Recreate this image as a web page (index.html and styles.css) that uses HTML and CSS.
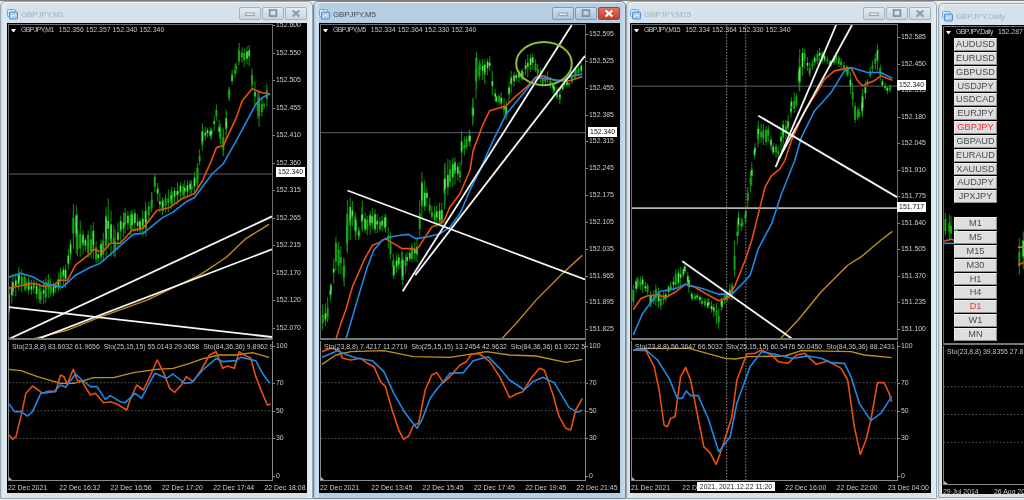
FILE: index.html
```html
<!DOCTYPE html>
<html lang="en">
<head>
<meta charset="utf-8">
<title>GBPJPY charts</title>
<link rel="stylesheet" href="styles.css">
</head>
<body>
<main class="desktop">

<section class="window w1">
  <header class="titlebar">
    <svg class="app-icon" viewBox="0 0 11 11"><rect x="0.5" y="0.5" width="8" height="7" rx="1" class="ic-back"/><rect x="2.5" y="3" width="8" height="7" rx="1" class="ic-front"/><path d="M4 8 5.5 6 7 7 9 5" class="ic-line"/></svg>
    <span class="title">GBPJPY,M1</span>
    <div class="controls">
      <span class="ctl"><svg viewBox="0 0 22 13"><rect x="6" y="6" width="10" height="3" class="glyph"/></svg></span>
      <span class="ctl"><svg viewBox="0 0 22 13"><rect x="7" y="2.5" width="8" height="7" class="glyph-box"/></svg></span>
      <span class="ctl"><svg viewBox="0 0 22 13"><path d="M7 3 15 10M15 3 7 10" class="glyph-x"/></svg></span>
    </div>
  </header>
  <div class="client">
    <div class="pane main-pane">
      <svg class="plot" viewBox="8 24 265 314" preserveAspectRatio="none">
        <g class="candles" data-step="2.8" data-env="8,285,328;12,272,300;18,265,293;25,275,295;33,277,297;40,280,305;45,273,305;50,275,298;55,282,295;60,265,290;65,260,290;70,235,262;73,198,255;77,205,260;85,235,255;93,220,265;98,250,265;103,225,262;108,192,260;115,225,265;125,205,235;132,205,235;140,215,235;146,200,240;152,190,215;155,172,190;160,190,215;163,195,215;172,185,210;178,180,205;185,180,200;192,178,195;195,170,195;198,160,190;200,147,165;203,120,150;208,127,137;212,125,140;217,103,123;221,120,145;224,127,160;227,107,140;230,83,100;233,67,83;237,60,75;240,40,67;245,43,67;250,43,70;253,67,90;260,90,127;265,100,110;270,67,107"></g>
        <line x1="8" y1="173.5" x2="273" y2="173.5" class="hline"/>
        <polyline class="gold" points="32,339 67,330 97,318 147,300 200,275 227,257 247,238 270,224"/>
        <polyline class="red" points="8,288 17,286 33,283 43,286 53,285 60,280 67,280 75,265 90,253 93,249 102,252 110,243 120,243 132,230 143,228 157,210 170,207 183,198 195,193 203,180 212,160 217,147 224,145 237,117 243,100 253,88 263,92 271,93"/>
        <polyline class="blue" points="8,277 20,273 33,277 43,283 62,287 75,275 90,267 100,263 117,248 133,234 143,233 163,217 173,212 187,201 195,197 213,173 224,163 237,140 257,103 263,97 271,93"/>
        <line x1="8" y1="339" x2="273" y2="216" class="trend"/>
        <line x1="37" y1="339" x2="273" y2="249" class="trend"/>
        <line x1="8" y1="307" x2="273" y2="337" class="trend"/>
      </svg>
      <p class="legend"><i class="tri"></i><span class="sym">GBPJPY,M1</span><span>152.356 152.357 152.340 152.340</span></p>
    </div>
    <div class="price-axis">
      <span>152.600</span><span>152.550</span><span>152.505</span><span>152.455</span><span>152.410</span><span>152.360</span><span>152.315</span><span>152.265</span><span>152.215</span><span>152.170</span><span>152.120</span><span>152.070</span>
    </div>
    <div class="sep"></div>
    <div class="pane sub-pane">
      <svg class="plot" viewBox="24 33 795 417" preserveAspectRatio="none">
        <line x1="24" y1="158" x2="819" y2="158" class="level"/><line x1="24" y1="242" x2="819" y2="242" class="level"/><line x1="24" y1="325" x2="819" y2="325" class="level"/>
        <polygon points="24,450 24,441 33,450" class="corner"/>
        <polyline class="gold" points="24,118 60,122 110,140 180,160 220,160 280,143 340,143 400,128 470,118 520,115 570,100 610,86 660,75 710,75 760,68 810,82"/>
        <polyline class="red" points="25,315 35,328 45,320 60,260 75,190 95,168 115,182 125,190 145,183 165,185 180,135 190,140 200,162 218,118 230,150 245,155 270,195 285,190 310,218 330,215 350,222 380,240 390,210 410,165 430,180 445,150 472,90 490,125 510,175 525,187 545,165 560,140 580,155 605,120 630,75 650,65 670,115 685,108 705,115 720,65 735,75 755,85 770,140 790,190 805,225 815,222"/>
        <polyline class="blue" points="25,222 40,245 60,245 80,258 95,245 120,190 160,185 180,165 195,172 225,132 245,150 270,170 290,170 315,208 330,197 360,215 375,218 405,190 425,205 445,165 465,130 500,145 520,132 555,160 575,158 610,120 650,85 670,95 710,92 725,82 770,92 790,130 812,160"/>
      </svg>
      <p class="legend sub-legend"><span>Sto(23,8,8) 83.6032 61.9656</span><span>Sto(25,15,15) 55.0143 29.3658</span><span>Sto(84,36,36) 9.8962 9</span></p>
    </div>
    <div class="level-axis"><span>100</span><span>70</span><span>50</span><span>30</span><span>0</span></div>
    <div class="time-axis">
      <span>22 Dec 2021</span><span>22 Dec 16:32</span><span>22 Dec 16:56</span><span>22 Dec 17:20</span><span>22 Dec 17:44</span><span>22 Dec 18:08</span>
    </div>
    <b class="tag tag-a">152.340</b>
  </div>
</section>

<section class="window w2 active">
  <header class="titlebar">
    <svg class="app-icon" viewBox="0 0 11 11"><rect x="0.5" y="0.5" width="8" height="7" rx="1" class="ic-back"/><rect x="2.5" y="3" width="8" height="7" rx="1" class="ic-front"/><path d="M4 8 5.5 6 7 7 9 5" class="ic-line"/></svg>
    <span class="title">GBPJPY,M5</span>
    <div class="controls">
      <span class="ctl"><svg viewBox="0 0 22 13"><rect x="6" y="6" width="10" height="3" class="glyph"/></svg></span>
      <span class="ctl"><svg viewBox="0 0 22 13"><rect x="7" y="2.5" width="8" height="7" class="glyph-box"/></svg></span>
      <span class="ctl ctl-close"><svg viewBox="0 0 22 13"><path d="M7 3 15 10M15 3 7 10" class="glyph-x"/></svg></span>
    </div>
  </header>
  <div class="client">
    <div class="pane main-pane">
      <svg class="plot" viewBox="30 72 798 942" preserveAspectRatio="none">
        <g class="candles" data-step="8.4" data-env="35,900,1010;50,880,980;60,840,900;75,700,830;90,730,830;100,770,860;110,570,770;125,600,680;135,640,720;145,680,720;155,600,700;170,640,710;185,610,700;200,640,700;215,640,700;225,640,700;240,690,780;250,760,840;265,750,810;277,750,860;290,750,800;305,720,790;320,700,800;335,510,680;350,560,620;365,610,660;380,600,690;395,600,690;405,450,640;420,470,560;435,470,560;450,470,550;455,390,500;470,400,450;480,380,440;490,275,370;500,130,280;510,170,240;525,170,260;540,160,220;548,200,290;560,280,310;575,270,330;590,300,370;605,195,280;620,210,250;640,200,240;655,155,230;670,150,210;685,180,230;700,220,260;715,210,250;735,240,290;752,260,310;765,230,260;780,240,260;800,200,235;820,180,230"></g>
        <line x1="30" y1="396" x2="828" y2="396" class="hline"/>
        <polyline class="gold" points="575,1018 620,970 680,900 760,820 820,765"/>
        <polyline class="red" points="75,1018 90,970 105,930 125,860 160,780 185,735 205,727 225,715 250,730 275,745 300,745 320,748 345,710 365,680 400,665 420,620 450,580 480,510 490,450 520,370 540,330 590,315 620,285 650,260 680,228 700,225 740,240 780,240 820,228"/>
        <polyline class="blue" points="105,1018 140,900 170,800 190,750 215,720 240,710 270,705 295,702 315,715 350,710 390,700 420,680 450,640 480,570 510,510 550,420 590,340 640,280 680,230 720,235 760,240 790,225 820,220"/>
        <line x1="277" y1="873" x2="788" y2="72" class="trend"/>
        <line x1="315" y1="825" x2="828" y2="165" class="trend"/>
        <line x1="110" y1="570" x2="828" y2="838" class="trend"/>
        <ellipse cx="704" cy="188" rx="84" ry="65" class="circle"/>
      </svg>
      <p class="legend"><i class="tri"></i><span class="sym">GBPJPY,M5</span><span>152.334 152.364 152.330 152.340</span></p>
    </div>
    <div class="price-axis">
      <span>152.595</span><span>152.525</span><span>152.455</span><span>152.385</span><span>152.315</span><span>152.245</span><span>152.175</span><span>152.105</span><span>152.035</span><span>151.965</span><span>151.895</span><span>151.825</span>
    </div>
    <div class="sep"></div>
    <div class="pane sub-pane">
      <svg class="plot" viewBox="30 33 798 417" preserveAspectRatio="none">
        <line x1="30" y1="158" x2="828" y2="158" class="level"/><line x1="30" y1="242" x2="828" y2="242" class="level"/><line x1="30" y1="325" x2="828" y2="325" class="level"/>
        <polygon points="30,450 30,441 39,450" class="corner"/>
        <polyline class="gold" points="33,103 75,75 120,65 220,62 310,80 420,82 530,65 600,75 680,78 770,97 820,88"/>
        <polyline class="red" points="33,65 60,55 85,60 95,85 120,90 150,85 170,100 190,110 210,155 225,170 245,240 265,300 280,328 295,318 310,285 325,280 345,180 365,135 380,128 400,158 420,140 450,105 470,95 485,72 510,72 540,95 570,140 600,203 620,192 640,185 665,145 690,115 705,120 730,190 750,260 770,295 785,300 800,240 820,205"/>
        <polyline class="blue" points="33,82 80,62 110,75 140,85 185,92 220,125 250,190 285,250 320,295 335,270 360,205 380,178 400,155 420,130 460,128 490,92 535,80 570,115 600,150 645,180 670,155 700,142 735,158 760,200 780,233 805,247 820,240"/>
      </svg>
      <p class="legend sub-legend"><span>Sto(23,8,8) 7.4217 11.2719</span><span>Sto(25,15,15) 13.2454 42.9632</span><span>Sto(84,36,36) 61.9222 5</span></p>
    </div>
    <div class="level-axis"><span>100</span><span>70</span><span>50</span><span>30</span><span>0</span></div>
    <div class="time-axis">
      <span>22 Dec 2021</span><span>22 Dec 13:45</span><span>22 Dec 15:45</span><span>22 Dec 17:45</span><span>22 Dec 19:45</span><span>22 Dec 21:45</span>
    </div>
    <b class="tag tag-a">152.340</b>
  </div>
</section>

<section class="window w3">
  <header class="titlebar">
    <svg class="app-icon" viewBox="0 0 11 11"><rect x="0.5" y="0.5" width="8" height="7" rx="1" class="ic-back"/><rect x="2.5" y="3" width="8" height="7" rx="1" class="ic-front"/><path d="M4 8 5.5 6 7 7 9 5" class="ic-line"/></svg>
    <span class="title">GBPJPY,M15</span>
    <div class="controls">
      <span class="ctl"><svg viewBox="0 0 22 13"><rect x="6" y="6" width="10" height="3" class="glyph"/></svg></span>
      <span class="ctl"><svg viewBox="0 0 22 13"><rect x="7" y="2.5" width="8" height="7" class="glyph-box"/></svg></span>
      <span class="ctl"><svg viewBox="0 0 22 13"><path d="M7 3 15 10M15 3 7 10" class="glyph-x"/></svg></span>
    </div>
  </header>
  <div class="client">
    <div class="pane main-pane">
      <svg class="plot" viewBox="18 72 801 942" preserveAspectRatio="none">
        <g class="candles" data-step="8.4" data-env="22,845,920;35,820,870;50,825,880;65,845,890;75,875,930;90,845,920;105,870,930;120,865,915;135,835,880;150,805,875;165,800,860;178,790,825;190,820,890;200,880,905;215,875,900;230,885,925;250,890,930;265,900,960;280,910,995;290,880,930;305,875,910;320,830,915;328,710,830;340,620,725;352,655,685;362,620,670;368,550,625;380,480,560;390,420,470;400,360,440;415,360,440;430,370,430;445,420,470;460,430,480;475,350,450;490,340,400;500,280,350;515,270,330;525,120,270;540,140,210;555,180,230;570,160,200;585,130,190;600,150,190;620,180,200;635,150,190;650,170,210;670,190,230;685,230,320;692,300,380;705,320,355;715,250,350;730,230,260;745,170,220;760,125,220;775,230,260;790,250,285;805,240,275"></g>
        <line x1="18" y1="256" x2="819" y2="256" class="hline"/>
        <line x1="18" y1="623" x2="819" y2="623" class="hline-bold"/>
        <line x1="304" y1="72" x2="304" y2="1014" class="vdash"/><line x1="362" y1="72" x2="362" y2="1014" class="vdash"/>
        <polyline class="gold" points="465,1018 520,960 590,875 670,795 710,770 770,720 805,693"/>
        <polyline class="red" points="22,928 45,895 65,887 100,885 120,892 150,875 180,852 210,862 240,880 280,902 310,892 330,855 360,780 380,720 405,620 420,560 440,525 465,505 480,480 500,420 540,330 580,270 600,235 630,210 680,200 700,240 715,255 750,240 770,225 805,238"/>
        <polyline class="blue" points="22,1005 50,940 100,875 150,865 180,852 230,865 280,882 320,882 360,842 375,825 400,745 440,670 470,580 510,480 530,410 570,330 620,275 660,210 680,200 730,215 770,215 805,232"/>
        <line x1="452" y1="500" x2="635" y2="72" class="trend"/>
        <line x1="462" y1="475" x2="683" y2="72" class="trend"/>
        <line x1="400" y1="345" x2="819" y2="590" class="trend"/>
        <line x1="170" y1="783" x2="507" y2="1020" class="trend"/>
      </svg>
      <p class="legend"><i class="tri"></i><span class="sym">GBPJPY,M15</span><span>152.334 152.364 152.330 152.340</span></p>
    </div>
    <div class="price-axis">
      <span>152.585</span><span>152.450</span><span>152.315</span><span>152.180</span><span>152.045</span><span>151.910</span><span>151.775</span><span>151.640</span><span>151.505</span><span>151.370</span><span>151.235</span><span>151.100</span>
    </div>
    <div class="sep"></div>
    <div class="pane sub-pane">
      <svg class="plot" viewBox="18 33 801 417" preserveAspectRatio="none">
        <line x1="18" y1="158" x2="819" y2="158" class="level"/><line x1="18" y1="242" x2="819" y2="242" class="level"/><line x1="18" y1="325" x2="819" y2="325" class="level"/>
        <line x1="304" y1="33" x2="304" y2="450" class="vdash"/><line x1="362" y1="33" x2="362" y2="450" class="vdash"/>
        <polygon points="18,450 18,441 27,450" class="corner"/>
        <polyline class="gold" points="22,60 60,55 190,55 300,85 330,87 370,80 480,78 530,62 680,65 720,75 803,83"/>
        <polyline class="red" points="22,60 60,62 85,110 100,180 115,285 125,290 135,265 148,260 165,140 180,112 195,150 215,250 235,350 255,370 272,403 285,370 320,260 335,150 365,72 390,70 410,60 440,75 460,95 490,100 515,75 540,70 575,103 610,93 650,115 670,150 690,290 708,373 725,330 740,270 760,158 780,158 795,190 803,215"/>
        <polyline class="blue" points="22,60 60,60 95,90 130,145 155,205 170,205 182,183 195,197 218,197 250,270 280,365 315,320 335,220 375,110 410,65 450,73 500,85 550,78 590,85 620,98 660,100 680,140 705,220 740,272 770,250 803,200"/>
      </svg>
      <p class="legend sub-legend"><span>Sto(23,8,8) 56.3647 66.5032</span><span>Sto(25,15,15) 60.5476 50.0450</span><span>Sto(84,36,36) 88.2431</span></p>
    </div>
    <div class="level-axis"><span>100</span><span>70</span><span>50</span><span>30</span><span>0</span></div>
    <div class="time-axis">
      <span>21 Dec 2021</span><span>22 Dec 10:00</span><span>22 Dec 16:00</span><span>22 Dec 22:00</span><span>23 Dec 04:00</span>
    </div>
    <b class="tag tag-a">152.340</b>
    <b class="tag tag-b">151.717</b>
    <b class="time-tip">2021, 2021.12.22 11:20</b>
  </div>
</section>

<section class="window w4">
  <header class="titlebar">
    <svg class="app-icon" viewBox="0 0 11 11"><rect x="0.5" y="0.5" width="8" height="7" rx="1" class="ic-back"/><rect x="2.5" y="3" width="8" height="7" rx="1" class="ic-front"/><path d="M4 8 5.5 6 7 7 9 5" class="ic-line"/></svg>
    <span class="title">GBPJPY,Daily</span>
  </header>
  <div class="client">
    <div class="pane main-pane">
      <svg class="plot" viewBox="943 26 81 317" preserveAspectRatio="none">
        <g class="candles" data-step="2.8" data-env="944,212,240;948,215,243;952,225,240;956,235,245"></g>
        <g class="candles" data-step="2.8" data-env="997,235,275;1003,225,262;1006,215,268;1010,225,285;1014,240,300;1018,265,320;1022,250,310"></g>
        <polyline class="gold" points="996,247 1010,246 1024,249"/>
        <polyline class="red" points="943,241 948,239 953,241 958,241"/>
        <polyline class="red" points="996,265 1003,260 1010,256 1017,262 1024,268"/>
        <polyline class="blue" points="1008,262 1016,268 1024,270"/>
        <polyline class="blue" points="943,243 958,243"/>
      </svg>
      <p class="legend"><i class="tri"></i><span class="sym">GBPJPY,Daily</span><span>152.287</span></p>
    </div>
    <div class="sep"></div>
    <div class="pane sub-pane">
      <svg class="plot" viewBox="943 344 81 139" preserveAspectRatio="none">
        <line x1="943" y1="385" x2="1024" y2="385" class="level"/><line x1="943" y1="413" x2="1024" y2="413" class="level"/><line x1="943" y1="441" x2="1024" y2="441" class="level"/>
        <polygon points="943,483 943,480 946,483" class="corner"/>
        <polyline class="red" points="1010,388 1013,391 1016,400 1019,415 1024,417"/>
      </svg>
      <p class="legend sub-legend"><span>Sto(23,8,8) 39.8355 27.8</span></p>
    </div>
    <div class="time-axis">
      <span>29 Jul 2014</span><span>26 Aug 2014</span>
    </div>
    <nav class="symbol-bar">
      <div class="btn-group">
        <button class="mt-btn">AUDUSD</button><button class="mt-btn">EURUSD</button><button class="mt-btn">GBPUSD</button><button class="mt-btn">USDJPY</button><button class="mt-btn">USDCAD</button><button class="mt-btn">EURJPY</button><button class="mt-btn on">GBPJPY</button><button class="mt-btn">GBPAUD</button><button class="mt-btn">EURAUD</button><button class="mt-btn">XAUUSD</button><button class="mt-btn">AUDJPY</button><button class="mt-btn">JPXJPY</button>
      </div>
      <div class="btn-group">
        <button class="mt-btn">M1</button><button class="mt-btn">M5</button><button class="mt-btn">M15</button><button class="mt-btn">M30</button><button class="mt-btn">H1</button><button class="mt-btn">H4</button><button class="mt-btn on">D1</button><button class="mt-btn">W1</button><button class="mt-btn">MN</button>
      </div>
    </nav>
  </div>
</section>

</main>
<script src="chart.js"></script>
</body>
</html>
```
FILE: styles.css
```css
* { box-sizing: border-box; }
html, body { margin: 0; height: 100%; }
body { width: 1024px; height: 500px; overflow: hidden; background: #dfe6eb; }

.desktop {
  position: relative;
  width: 1024px;
  height: 500px;
  overflow: hidden;
  border-top: 1px solid #7f7f7f;
  background: #e6ecf0;
  font-family: "Liberation Sans", Arial, sans-serif;
  filter: blur(0.4px);
}

.window {
  position: absolute;
  display: flex;
  flex-direction: column;
  border: 1px solid #9aa6af;
  border-radius: 5px 5px 0 0;
  background: linear-gradient(90deg, #c9d8e3 0, #e4ecf2 3px, #d6e1ea 6px, #d6e1ea calc(100% - 6px), #e8eff4 100%);
  box-shadow: inset 0 1px 0 #eef3f6;
}
.window.active {
  background: linear-gradient(90deg, #aac4d8 0, #d4e4f0 3px, #b5cee2 6px, #b5cee2 calc(100% - 6px), #c9dcea 100%);
  border-color: #6f8797;
}
.w1 { left: 0; top: 0; width: 313px; height: 498px; padding: 0 5px 5px 6px; }
.w2 { left: 313px; top: 0; width: 313px; height: 498px; padding: 0 5px 5px 5px; }
.w3 { left: 626px; top: 0; width: 311px; height: 498px; padding: 0 5px 5px 3px; }
.w4 { left: 938px; top: 2px; width: 120px; height: 495px; padding: 0 0 3px 3px; }

.titlebar { flex: 0 0 21px; display: flex; align-items: center; gap: 3px; padding-top: 3px; min-width: 0; }
.app-icon { flex: 0 0 11px; width: 11px; height: 11px; }
.ic-back { fill: #d7e6f4; stroke: #6fa6d8; stroke-width: 1; }
.ic-front { fill: #a9cdf0; stroke: #4d8fd0; stroke-width: 1; }
.ic-line { fill: none; stroke: #fff; stroke-width: 0.8; }
.title { font-size: 8px; letter-spacing: -0.12px; color: #a3b1bb; white-space: nowrap; }
.active .title { color: #3d4c57; }

.controls { margin-left: auto; display: flex; gap: 1px; align-self: flex-start; padding-top: 2px; }
.ctl { width: 22px; height: 13px; border: 1px solid #a6b3bd; border-radius: 2px; background: linear-gradient(#e3ebf1, #c9d5de); }
.ctl svg { display: block; width: 100%; height: 100%; }
.active .ctl { background: linear-gradient(#cfe0ed, #a9c3d7); border-color: #8099ab; }
.ctl-close, .active .ctl-close { background: linear-gradient(#e2725f, #bf3f2e); border-color: #8f4a42; }
.glyph { fill: #eef3f7; stroke: #7f8f9b; stroke-width: 1; }
.glyph-box { fill: none; stroke: #7f8f9b; stroke-width: 2; }
.glyph-x { fill: none; stroke: #8a98a3; stroke-width: 2.4; }
.ctl-close .glyph-x { stroke: #fff; }

.client {
  position: relative;
  flex: 1;
  min-height: 0;
  overflow: hidden;
  background: #000;
  color: #cccccc;
  font-size: 6.9px;
  line-height: 10px;
  padding: 1px 0 0 1px;
  display: grid;
  grid-template-rows: 314px 3px 140px 1fr;
}
.w1 .client { grid-template-columns: 265px 1fr; --row: 27.5px; --first: -4px; }
.w2 .client { grid-template-columns: 266px 1fr; --row: 26.85px; --first: 5px; }
.w3 .client { grid-template-columns: 267px 1fr; --row: 26.55px; --first: 8px; }
.w4 .client { grid-template-columns: 1fr; grid-template-rows: 317px 3px 139px 1fr; }

.pane { position: relative; min-width: 0; overflow: hidden; border: solid #6e6e6e; border-width: 1px 1px 0 1px; }
.sub-pane { border-bottom-width: 1px; border-top-width: 0; border-color: #8a8a8a; }
.w4 .pane { border-right: 0; }
.sep { background: #777; border-bottom: 1px solid #000; }

.plot { display: block; width: 100%; height: 100%; }
.plot * { vector-effect: non-scaling-stroke; fill: none; }
.wick { stroke: #0b860b; stroke-width: 1.1px; }
.body { stroke: #14a514; stroke-width: 2px; }
.glow { stroke: #5ee85e; stroke-width: 1.1px; }
.red { stroke: #e8500f; stroke-width: 1.6px; stroke-linejoin: round; }
.blue { stroke: #2088e4; stroke-width: 1.6px; stroke-linejoin: round; }
.gold { stroke: #c0901c; stroke-width: 1.4px; stroke-linejoin: round; }
.trend { stroke: #f6f6f6; stroke-width: 1.8px; }
.hline { stroke: #5c6468; stroke-width: 1px; }
.hline-bold { stroke: #b4b4b4; stroke-width: 1.6px; }
.vdash { stroke: #8c8c8c; stroke-width: 1px; stroke-dasharray: 1.5 1.5; }
.level { stroke: #5a5a5a; stroke-width: 1px; stroke-dasharray: 1.5 2; }
.circle { stroke: #8fbd3c; stroke-width: 2px; }
.plot .corner { fill: #b0b8c4; }

.legend {
  position: absolute;
  top: 0;
  left: 2px;
  right: 0;
  margin: 0;
  display: flex;
  align-items: center;
  gap: 5px;
  white-space: nowrap;
  overflow: hidden;
  color: #c4c4c4;
}
.tri { flex: 0 0 5px; width: 0; height: 0; border: 2.5px solid transparent; border-top: 3px solid #fff; border-bottom: 0; }
.sym { letter-spacing: -0.55px; }
.sub-legend { top: 1px; left: 3px; gap: 4px; }

.price-axis {
  grid-row: 1 / 3;
  grid-column: 2;
  display: grid;
  grid-auto-rows: var(--row);
  margin-top: var(--first);
  padding-left: 3px;
  height: 0;
}
.price-axis span, .level-axis span { position: relative; }
.price-axis span::before, .level-axis span::before { content: ""; position: absolute; left: -3px; top: 5px; width: 1.5px; height: 1px; background: #888; }

.level-axis {
  grid-row: 3;
  grid-column: 2;
  display: grid;
  grid-template-rows: 37px 28px 27px 38px 10px;
  padding-left: 3px;
}

.time-axis {
  grid-column: 1 / -1;
  display: flex;
  white-space: nowrap;
  padding-top: 2px;
}
.time-axis span { flex: 0 0 51.3px; }
.w3 .time-axis span:nth-child(2) { flex-basis: 103px; }
.w4 .time-axis span { flex-basis: 51px; }

.tag { position: absolute; font-weight: normal; background: #fff; color: #111; line-height: 10px; padding: 0 2px; }
.tag-a { right: 2px; }
.w1 .tag-a { top: 144px; }
.w2 .tag-a { top: 104px; right: 3px; }
.w3 .tag-a { top: 57px; right: 5px; }
.tag-b { top: 179px; right: 5px; }
.time-tip { position: absolute; left: 67px; top: 459px; width: 78px; text-align: center; font-weight: normal; background: #fff; color: #222; line-height: 9px; }

.symbol-bar { position: absolute; left: 12px; top: 13px; display: flex; flex-direction: column; gap: 14px; }
.btn-group { display: flex; flex-direction: column; gap: 1px; }
.mt-btn {
  width: 43px;
  height: 12.85px;
  padding: 0;
  font: 9.2px/11px "Liberation Sans", Arial, sans-serif;
  color: #4c4c4c;
  background: #dedede;
  border: 1px solid;
  border-color: #f0f0f0 #8e8e8e #8e8e8e #f0f0f0;
}
.mt-btn.on { color: #f0333a; }
```
FILE: chart.js
```js
// Draws candle bars from an envelope of "x,top,bottom" points held on each group.
var SVG_NS = "http://www.w3.org/2000/svg";
var seed = 7;
function rnd() {
  seed = (seed * 16807) % 2147483647;
  return seed / 2147483647;
}
function addPath(group, cls, d) {
  var p = document.createElementNS(SVG_NS, "path");
  p.setAttribute("class", cls);
  p.setAttribute("d", d);
  group.appendChild(p);
}
document.querySelectorAll(".candles").forEach(function (g) {
  var step = parseFloat(g.dataset.step);
  var env = g.dataset.env.split(";").map(function (s) { return s.split(",").map(Number); });
  var wick = "", body = "", glow = "";
  for (var i = 0; i < env.length - 1; i++) {
    var a = env[i], b = env[i + 1];
    for (var x = a[0]; x < b[0]; x += step) {
      var t = (x - a[0]) / (b[0] - a[0]);
      var h0 = (a[2] + (b[2] - a[2]) * t) - (a[1] + (b[1] - a[1]) * t);
      var top = a[1] + (b[1] - a[1]) * t + h0 * 0.2 * rnd();
      var bot = a[2] + (b[2] - a[2]) * t - h0 * 0.2 * rnd();
      var h = bot - top;
      var bt = top + h * (0.15 + 0.3 * rnd());
      var bb = bot - h * (0.15 + 0.3 * rnd());
      wick += "M" + x + " " + top + "V" + bot;
      body += "M" + x + " " + bt + "V" + bb;
      if (rnd() > 0.5) {
        var gt = bt + (bb - bt) * 0.1 * rnd();
        glow += "M" + x + " " + gt + "V" + (bb - (bb - bt) * 0.3 * rnd());
      }
    }
  }
  addPath(g, "wick", wick);
  addPath(g, "body", body);
  addPath(g, "glow", glow);
});
```
